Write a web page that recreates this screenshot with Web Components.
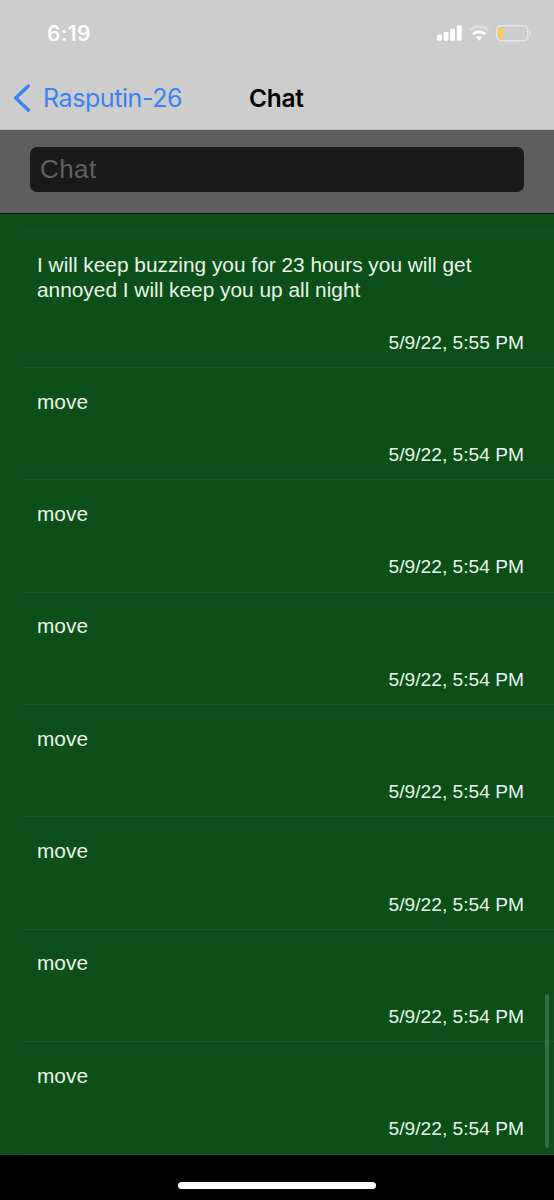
<!DOCTYPE html>
<html lang="en">
<head>
<meta charset="utf-8">
<title>Chat</title>
<style>
  html, body { margin: 0; height: 100%; background: #000; overflow: hidden; }
</style>
</head>
<body>
<chat-screen></chat-screen>
<script>
const define = (name, html) => customElements.define(name, class extends HTMLElement {
  constructor() {
    super();
    this.attachShadow({ mode: "open" }).innerHTML = html;
  }
});

define("status-bar", `
<style>
  :host { display: flex; height: 66px; box-sizing: border-box; padding: 0 22px 0 47px; align-items: center; justify-content: space-between;
    font: 600 21px/24px Inter, sans-serif; color: #fff; }
  span { letter-spacing: 0.35px; padding-top: 2px; }
  svg { display: block; }
</style>
<span><slot></slot></span>
<svg width="96" height="20" viewBox="436 23 96 20">
  <g fill="#fff">
    <rect x="437" y="34.5" width="4.8" height="6.3" rx="1.2"/>
    <rect x="443.6" y="32" width="4.8" height="8.8" rx="1.2"/>
    <rect x="450.2" y="28.8" width="4.8" height="12" rx="1.2"/>
    <rect x="456.9" y="25.3" width="4.8" height="15.5" rx="1.2"/>
  </g>
  <g fill="none" stroke="#fff" stroke-width="2.9">
    <path d="M469.6 30.5a13.3 13.3 0 0 1 18.8 0" opacity=".35"/>
    <path d="M472.9 34.3a8.7 8.7 0 0 1 12.2 0"/>
  </g>
  <path d="M475.8 37.5a4.6 4.6 0 0 1 6.4 0L479 40.7z" fill="#fff"/>
  <rect x="496.7" y="25.7" width="31" height="15" rx="4.4" fill="none" stroke="#fff" stroke-opacity=".5" stroke-width="1.4"/>
  <path d="M503 27.5v11.6h-1.5a3 3 0 0 1-3-3v-5.6a3 3 0 0 1 3-3z" fill="#fdcf3d"/>
  <path d="M529.5 30.8q1.6.7 1.6 2.5t-1.6 2.5z" fill="#fff" opacity=".55"/>
</svg>`);

define("nav-bar", `
<style>
  :host { display: grid; grid-template-columns: 236px auto; justify-content: start; height: 64px; box-sizing: border-box; align-items: center;
    padding: 0 1px 0 13px; font: 25px/30px Inter, sans-serif; border-bottom: 1px solid #b5b5b5; }
  .back { display: flex; align-items: center; gap: 12px; color: #3b82f6; white-space: nowrap; }
  .back span { letter-spacing: -0.42px; }
  .title { font-weight: 600; font-size: 24.5px; color: #000; letter-spacing: -0.3px; }
</style>
<div class="back">
  <svg width="18" height="28" viewBox="0 0 18 28"><path d="M15.3 2 2.7 14l12.6 12" fill="none" stroke="#3b82f6" stroke-width="3.4" stroke-linecap="round" stroke-linejoin="round"/></svg>
  <span><slot name="back"></slot></span>
</div>
<div class="title"><slot></slot></div>`);

define("chat-field", `
<style>
  :host { display: flex; height: 84px; box-sizing: border-box; padding: 17px 30px 21px; background: #5e5e5e; border-bottom: 1px solid #0b0b0b; }
  .field { flex: 1; display: flex; align-items: center; padding: 0 0 2px 10px; border-radius: 7px; background: #1a1a1a; color: #606063;
    font: 26px/30px "Liberation Sans", Arial, sans-serif; letter-spacing: 0.4px; }
</style>
<div class="field"><span><slot></slot></span></div>`);

define("chat-message", `
<style>
  :host { display: flex; flex-direction: column; justify-content: space-between; height: 112.36px; box-sizing: border-box;
    margin-left: 24px; padding: 20.6px 30px 12.3px 13px; border-bottom: 1px solid #215428; color: #e9f5e8;
    font: 20.85px/25px "Liberation Sans", Arial, sans-serif; }
  :host([tall]) { height: 137px; }
  .date { align-self: flex-end; font-size: 19.2px; }
</style>
<div class="text"><slot></slot></div>
<div class="date"><slot name="date"></slot></div>`);

define("message-list", `
<style>
  :host { display: block; position: relative; height: 941px; box-sizing: border-box; background: #0d4f19; padding-top: 16px; overflow: hidden; }
  .top { height: 1px; margin-left: 24px; background: #17532a; }
  .scroll { position: absolute; right: 5px; bottom: 7px; width: 4px; height: 154px; border-radius: 2px; background: #347040; }
</style>
<div class="top"></div>
<slot></slot>
<div class="scroll"></div>`);

define("home-indicator", `
<style>
  :host { display: flex; height: 45px; justify-content: center; align-items: flex-start; padding-top: 27px; box-sizing: border-box; background: #000; }
  i { width: 198px; height: 7px; border-radius: 4px; background: #fff; }
</style><i></i>`);

const rows = Array.from({ length: 7 }, () => `<chat-message>move<span slot="date">5/9/22, 5:54 PM</span></chat-message>`).join("");

define("chat-screen", `
<style>
  :host { display: flex; flex-direction: column; width: 554px; height: 1200px; background: #cdcdcd; }
  status-bar, nav-bar, chat-field, message-list, home-indicator { flex: none; }
</style>
<status-bar>6:19</status-bar>
<nav-bar><span slot="back">Rasputin-26</span>Chat</nav-bar>
<chat-field>Chat</chat-field>
<message-list>
  <chat-message tall>I will keep buzzing you for 23 hours you will get<br>annoyed I will keep you up all night<span slot="date">5/9/22, 5:55 PM</span></chat-message>${rows}
</message-list>
<home-indicator></home-indicator>`);
</script>
</body>
</html>
